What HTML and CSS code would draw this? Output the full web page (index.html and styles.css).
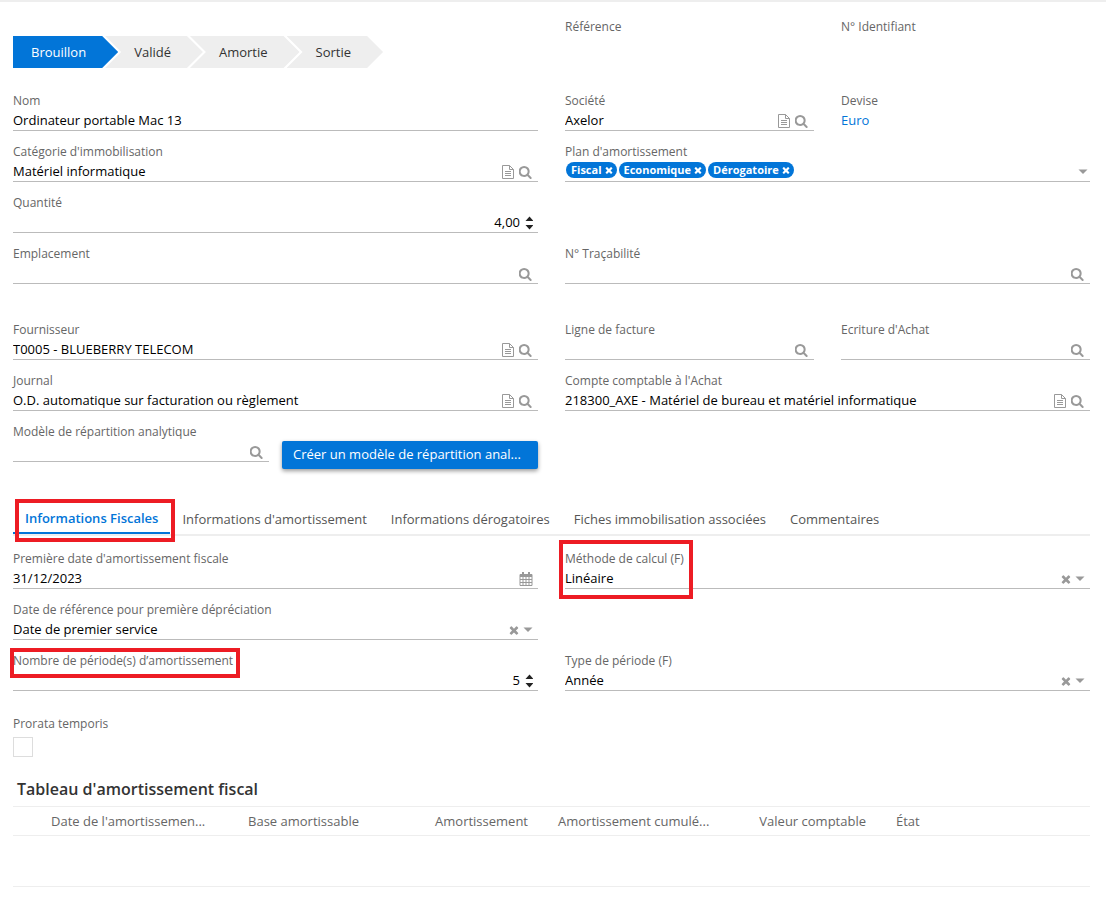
FILE: index.html
```html
<!DOCTYPE html>
<html lang="fr">
<head>
<meta charset="utf-8">
<meta name="viewport" content="width=device-width, initial-scale=1">
<title>Immobilisation</title>
<link rel="stylesheet" href="styles.css">
</head>
<body>
<svg class="sprite" aria-hidden="true">
  <symbol id="i-search" viewBox="110 0 1792 1792"><path d="M1216 832q0-185-131.500-316.500t-316.500-131.500-316.500 131.500-131.500 316.500 131.500 316.500 316.500 131.500 316.500-131.500 131.500-316.500zm512 832q0 52-38 90t-90 38q-54 0-90-38l-343-342q-179 124-399 124-143 0-273.500-55.500t-225-150-150-225-55.500-273.500 55.500-273.500 150-225 225-150 273.500-55.500 273.500 55.500 225 150 150 225 55.500 273.500q0 220-124 399l343 343q37 37 37 90z"/></symbol>
  <symbol id="i-file" viewBox="0 0 14 14"><path fill="none" stroke="currentColor" d="M1.500.500h7l4 4v9h-11zM8.500.500v4h4M4 6.500h6M4 8.500h6M4 10.500h6"/></symbol>
  <symbol id="i-times" viewBox="200 180 1400 1400"><path d="M1490 1322q0 40-28 68l-136 136q-28 28-68 28t-68-28l-294-294-294 294q-28 28-68 28t-68-28l-136-136q-28-28-28-68t28-68l294-294-294-294q-28-28-28-68t28-68l136-136q28-28 68-28t68 28l294 294 294-294q28-28 68-28t68 28l136 136q28 28 28 68t-28 68l-294 294 294 294q28 28 28 68z"/></symbol>
  <symbol id="i-caret" viewBox="0 0 10 10"><path d="M.5 2.500h9L5 7z"/></symbol>
  <symbol id="i-spin" viewBox="0 0 9 14"><path d="M1.500 5l4-4.500 4 4.500zM1.500 9h8l-4 4.500z"/></symbol>
  <symbol id="i-cal" viewBox="0 0 14 14"><path fill="none" stroke="currentColor" d="M1 2.500h12v11H1zM1 4.500h12M1 7.500h12M1 10.500h12M4 5v8.500M7 5v8.500M10 5v8.500"/><path d="M1 2h12v2.500H1zM3 0h2v4H3zM9 0h2v4H9z"/></symbol>
</svg>
<main class="page">
  <div class="grid header">
    <ol class="steps left">
      <li class="step active">Brouillon</li>
      <li class="step">Validé</li>
      <li class="step">Amortie</li>
      <li class="step">Sortie</li>
    </ol>
    <div class="label">Référence</div>
    <div class="label">N° Identifiant</div>
  </div>

  <section class="grid">
    <div class="field left"><label class="label" for="nom">Nom</label>
      <div class="control"><input id="nom" value="Ordinateur portable Mac 13"></div></div>
    <div class="field"><label class="label" for="soc">Société</label>
      <div class="control"><input id="soc" value="Axelor">
        <button class="icon" aria-label="Ouvrir"><svg><use href="#i-file"/></svg></button><button class="icon" aria-label="Rechercher"><svg><use href="#i-search"/></svg></button></div></div>
    <div class="field"><div class="label">Devise</div><a class="link" href="#">Euro</a></div>

    <div class="field left"><label class="label" for="cat">Catégorie d'immobilisation</label>
      <div class="control"><input id="cat" value="Matériel informatique">
        <button class="icon" aria-label="Ouvrir"><svg><use href="#i-file"/></svg></button><button class="icon" aria-label="Rechercher"><svg><use href="#i-search"/></svg></button></div></div>
    <div class="field right"><div class="label">Plan d'amortissement</div>
      <div class="control multi"><div class="tags">
        <span class="tag">Fiscal<button aria-label="Retirer Fiscal"><svg><use href="#i-times"/></svg></button></span>
        <span class="tag">Economique<button aria-label="Retirer Economique"><svg><use href="#i-times"/></svg></button></span>
        <span class="tag">Dérogatoire<button aria-label="Retirer Dérogatoire"><svg><use href="#i-times"/></svg></button></span></div>
        <button class="icon small" aria-label="Dérouler"><svg><use href="#i-caret"/></svg></button></div></div>

    <div class="field left"><label class="label" for="qte">Quantité</label>
      <div class="control"><input id="qte" class="number" inputmode="decimal" value="4,00">
        <button class="icon spin" aria-label="Ajuster"><svg><use href="#i-spin"/></svg></button></div></div>

    <div class="field left"><label class="label" for="emp">Emplacement</label>
      <div class="control"><input id="emp">
        <button class="icon" aria-label="Rechercher"><svg><use href="#i-search"/></svg></button></div></div>
    <div class="field right"><label class="label" for="tra">N° Traçabilité</label>
      <div class="control"><input id="tra">
        <button class="icon" aria-label="Rechercher"><svg><use href="#i-search"/></svg></button></div></div>
  </section>

  <section class="grid purchase">
    <div class="field left"><label class="label" for="fou">Fournisseur</label>
      <div class="control"><input id="fou" value="T0005 - BLUEBERRY TELECOM">
        <button class="icon" aria-label="Ouvrir"><svg><use href="#i-file"/></svg></button><button class="icon" aria-label="Rechercher"><svg><use href="#i-search"/></svg></button></div></div>
    <div class="field"><label class="label" for="lig">Ligne de facture</label>
      <div class="control"><input id="lig">
        <button class="icon" aria-label="Rechercher"><svg><use href="#i-search"/></svg></button></div></div>
    <div class="field"><label class="label" for="ecr">Ecriture d'Achat</label>
      <div class="control"><input id="ecr">
        <button class="icon" aria-label="Rechercher"><svg><use href="#i-search"/></svg></button></div></div>

    <div class="field left"><label class="label" for="jou">Journal</label>
      <div class="control"><input id="jou" value="O.D. automatique sur facturation ou règlement">
        <button class="icon" aria-label="Ouvrir"><svg><use href="#i-file"/></svg></button><button class="icon" aria-label="Rechercher"><svg><use href="#i-search"/></svg></button></div></div>
    <div class="field right"><label class="label" for="cpt">Compte comptable à l'Achat</label>
      <div class="control"><input id="cpt" value="218300_AXE - Matériel de bureau et matériel informatique">
        <button class="icon" aria-label="Ouvrir"><svg><use href="#i-file"/></svg></button><button class="icon" aria-label="Rechercher"><svg><use href="#i-search"/></svg></button></div></div>

    <div class="pair left">
      <div class="field"><label class="label" for="mod">Modèle de répartition analytique</label>
        <div class="control"><input id="mod">
          <button class="icon" aria-label="Rechercher"><svg><use href="#i-search"/></svg></button></div></div>
      <button class="primary">Créer un modèle de répartition anal...</button>
    </div>
  </section>

  <nav class="tabs" role="tablist">
    <button class="tab active" role="tab" aria-selected="true">Informations Fiscales<span class="mark mark-tab"></span></button>
    <button class="tab" role="tab" aria-selected="false">Informations d'amortissement</button>
    <button class="tab" role="tab" aria-selected="false">Informations dérogatoires</button>
    <button class="tab" role="tab" aria-selected="false">Fiches immobilisation associées</button>
    <button class="tab" role="tab" aria-selected="false">Commentaires</button>
  </nav>

  <section class="grid">
    <div class="field left"><label class="label" for="dat">Première date d'amortissement fiscale</label>
      <div class="control"><input id="dat" value="31/12/2023">
        <button class="icon" aria-label="Calendrier"><svg><use href="#i-cal"/></svg></button></div></div>
    <div class="field right"><label class="label" for="met">Méthode de calcul (F)</label>
      <div class="control"><select id="met"><option>Linéaire</option></select>
        <button class="icon small" aria-label="Effacer"><svg><use href="#i-times"/></svg></button><button class="icon small" aria-label="Dérouler"><svg><use href="#i-caret"/></svg></button></div>
      <span class="mark mark-method"></span></div>

    <div class="field left"><label class="label" for="ref">Date de référence pour première dépréciation</label>
      <div class="control"><select id="ref"><option>Date de premier service</option></select>
        <button class="icon small" aria-label="Effacer"><svg><use href="#i-times"/></svg></button><button class="icon small" aria-label="Dérouler"><svg><use href="#i-caret"/></svg></button></div></div>

    <div class="field left"><label class="label" for="nbp">Nombre de période(s) d’amortissement</label>
      <div class="control"><input id="nbp" class="number" inputmode="numeric" value="5">
        <button class="icon spin" aria-label="Ajuster"><svg><use href="#i-spin"/></svg></button></div>
      <span class="mark mark-periods"></span></div>
    <div class="field right"><label class="label" for="typ">Type de période (F)</label>
      <div class="control"><select id="typ"><option>Année</option></select>
        <button class="icon small" aria-label="Effacer"><svg><use href="#i-times"/></svg></button><button class="icon small" aria-label="Dérouler"><svg><use href="#i-caret"/></svg></button></div></div>
  </section>

  <div class="prorata">
    <label class="label" for="pro">Prorata temporis</label>
    <input id="pro" type="checkbox">
  </div>

  <h2 class="title">Tableau d'amortissement fiscal</h2>
  <table class="table">
    <colgroup><col class="c-check"><col class="c-data"><col class="c-data"><col class="c-data"><col class="c-data"><col class="c-data"><col></colgroup>
    <thead><tr>
      <th></th>
      <th class="long">Date de l'amortissemen...</th>
      <th class="num">Base amortissable</th>
      <th class="num">Amortissement</th>
      <th class="long">Amortissement cumulé...</th>
      <th class="num">Valeur comptable</th>
      <th>État</th>
    </tr></thead>
    <tbody><tr><td colspan="7"></td></tr></tbody>
  </table>
</main>
</body>
</html>
```
FILE: styles.css
```css
* { box-sizing: border-box; }
body {
  margin: 0;
  background: #fff;
  color: #000;
  font-family: "Open Sans", "Noto Sans", sans-serif;
  font-size: 13px;
  line-height: 20px;
}
button, input, select {
  font: inherit;
  color: inherit;
  margin: 0;
  padding: 0;
  border: 0;
  border-radius: 0;
  background: none;
}
svg { display: block; fill: currentColor; }
.sprite { display: none; }

.page { border-top: 2px solid #eee; padding: 0 16px 24px 13px; }
.grid {
  display: grid;
  grid-template-columns: repeat(4, minmax(0, 1fr));
  gap: 10px 27px;
}
.left { grid-column: 1 / 3; }
.right { grid-column: 3 / 5; }
.header { padding: 15px 0 22px; }
.purchase { margin-top: 35px; }
.pair {
  display: grid;
  grid-template-columns: 1fr 1fr;
  gap: 13px;
}

/* Status steps */
.steps { display: flex; margin: 19px 0 0; padding: 0; list-style: none; }
.step {
  padding: 0 32px 0 29px;
  margin-left: -13px;
  line-height: 32px;
  background: #eee;
  color: #333;
  clip-path: polygon(0 0, calc(100% - 16px) 0, 100% 50%, calc(100% - 16px) 100%, 0 100%, 16px 50%);
}
.step.active {
  margin-left: 0;
  padding-left: 18px;
  background: #0275d8;
  color: #fff;
  clip-path: polygon(0 0, calc(100% - 16px) 0, 100% 50%, calc(100% - 16px) 100%, 0 100%);
}

/* Fields */
.field { position: relative; min-width: 0; }
.label { display: block; font-size: 12px; line-height: 20px; color: #666; white-space: nowrap; }
.field .label { height: 20px; line-height: 22px; }
.control {
  display: flex;
  gap: 4px;
  height: 21px;
  padding-right: 5px;
  border-bottom: 1px solid #bbb;
}
.control.multi { padding-right: 2px; }
.control input, .control select {
  flex: 1;
  min-width: 0;
  height: 20px;
  appearance: none;
  outline: 0;
}
.control .number { text-align: right; }
.icon { display: flex; align-items: center; width: 14px; padding-top: 2px; color: #999; }
.icon svg { width: 14px; height: 14px; }
.icon.small { width: 10px; }
.icon.small svg { width: 10px; height: 10px; }
.icon.spin { width: 9px; color: #222; }
.icon.spin svg { width: 9px; overflow: visible; }
.link { color: #0275d8; text-decoration: none; }

.tags { display: flex; flex: 1; gap: 2px; padding: 1px; }
.tag {
  display: flex;
  align-items: center;
  gap: 3px;
  height: 16px;
  padding: 0 4px 0 5px;
  border-radius: 8px;
  background: #0275d8;
  color: #fff;
  font-size: 11px;
  font-weight: 700;
  line-height: 16px;
}
.tag svg { width: 8px; height: 8px; }

.primary {
  height: 28px;
  margin-top: 20px;
  padding: 0 11px 2px;
  border-radius: 2px;
  background: #0275d8;
  box-shadow: 0 2px 4px rgba(0, 0, 0, .4);
  color: #fff;
  text-align: left;
  white-space: nowrap;
  overflow: hidden;
}

/* Tabs */
.tabs { display: flex; margin: 34px 0 12px; border-bottom: 2px solid #eee; }
.tab {
  position: relative;
  height: 31px;
  padding: 0 12px;
  color: #555;
  white-space: nowrap;
}
.tab.active {
  margin-bottom: -1px;
  border-bottom: 2px solid #0275d8;
  color: #0275d8;
  font-weight: 600;
}

/* Red callouts drawn over the form */
.mark { position: absolute; border: 4px solid #ed1c24; pointer-events: none; }
.mark-tab { inset: -4px -5px -10px 2px; }
.mark-method { left: -6px; top: -8px; width: 134px; height: 59px; }
.mark-periods { left: -3px; top: -2px; width: 230px; height: 30px; }

.prorata { margin-top: 23px; }
.prorata input {
  display: block;
  width: 20px;
  height: 20px;
  margin-top: 3px;
  border: 1px solid #ddd;
  appearance: none;
}

.title { margin: 20px 4px 5px; font-size: 16px; font-weight: 600; line-height: 24px; color: #333; }
.table { width: 100%; border-collapse: collapse; table-layout: fixed; }
.c-check { width: 23px; }
.c-data { width: 169px; }
.table th {
  height: 29px;
  padding: 0 15px;
  border-top: 1px solid #eee;
  border-bottom: 1px solid #eee;
  color: #666;
  font-weight: 400;
  text-align: left;
  white-space: nowrap;
}
.table .num { text-align: right; }
.table .long { padding-right: 0; }
.table td { height: 51px; padding: 0; border-bottom: 1px solid #eee; }
```
